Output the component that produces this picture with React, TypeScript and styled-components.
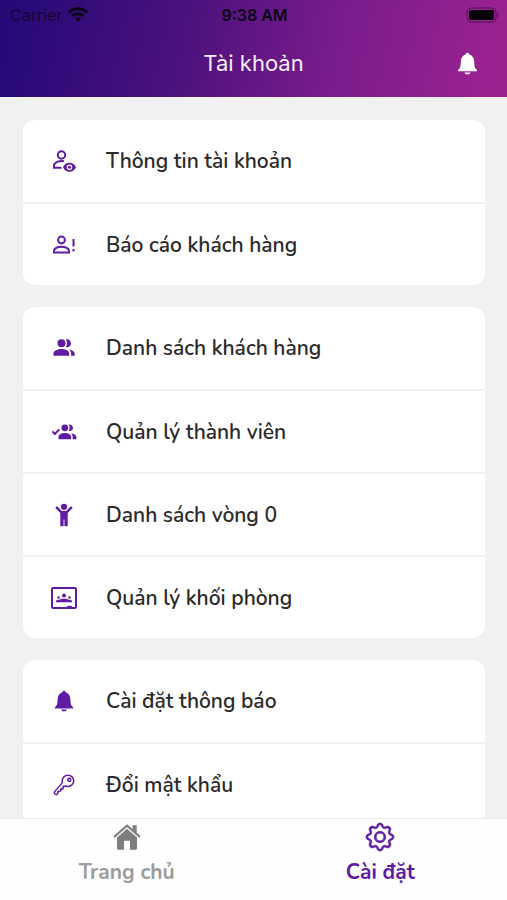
import React from "react";
import styled, { createGlobalStyle } from "styled-components";
import { BsGear } from "react-icons/bs";
import { IoKeyOutline } from "react-icons/io5";

const PURPLE = "#5f1ba3";

const GlobalStyle = createGlobalStyle`
  *, *::before, *::after { box-sizing: border-box; }
  body { margin: 0; background: #f1f1f1; }
  button { border: 0; padding: 0; margin: 0; background: none; font: inherit; color: inherit; cursor: pointer; }
`;

const Screen = styled.div`
  display: flex;
  flex-direction: column;
  height: 100vh;
  background: #f1f1f1;
  color: #2b2b2b;
  font-family: "Nunito", "Lato", sans-serif;
`;

const Header = styled.header`
  flex: none;
  background: linear-gradient(102deg, #270a78 4%, #4b117c 36%, #7a1c8c 66%, #9c2291 98%);
  font-family: "Inter", "Roboto", sans-serif;
`;

const StatusBar = styled.div`
  display: grid;
  grid-template-columns: 1fr auto 1fr;
  align-items: center;
  height: 29px;
  padding: 0 8px 0 10px;
  color: #0b0414;
  font-size: 16px;
  line-height: 20px;
`;

const Carrier = styled.div`
  display: flex;
  align-items: center;
  gap: 6px;
`;

const CarrierName = styled.span`
  opacity: 0.7;
`;

const Clock = styled.time`
  font-weight: 600;
`;

const Battery = styled.svg`
  justify-self: end;
`;

const TitleBar = styled.div`
  display: grid;
  grid-template-columns: 1fr auto 1fr;
  align-items: center;
  height: 68px;
  padding: 0 28px;
`;

const Title = styled.h1`
  grid-column: 2;
  margin: 0;
  color: #f6effa;
  font-size: 22px;
  font-weight: 400;
  line-height: 28px;
`;

const BellButton = styled.button`
  display: flex;
  justify-self: end;
  && { color: #fff; }
`;

const Content = styled.main`
  flex: 1;
  min-height: 0;
  overflow: hidden auto;
  scrollbar-width: none;
  display: flex;
  flex-direction: column;
  gap: 22px;
  padding: 23px 22px 23px 23px;
`;

const Card = styled.section`
  flex: none;
  border-radius: 12px;
  background: #fff;
  overflow: hidden;
`;

const Row = styled.button`
  && {
    display: grid;
    grid-template-columns: 26px 1fr;
    align-items: center;
    gap: 29px;
    width: 100%;
    height: 82px;
    padding: 0 28px;
    font-size: 21px;
    font-weight: 600;
    line-height: 28px;
    text-align: left;
  }
  && + && {
    height: 83px;
    border-top: 2px solid #f1f1f1;
  }
`;

const RowIcon = styled.span`
  display: flex;
  justify-content: center;
  color: ${PURPLE};
`;

const TabBar = styled.nav`
  flex: none;
  display: grid;
  grid-template-columns: 1fr 1fr;
  height: 82px;
  border-top: 1px solid #e9e8e6;
  background: #fefefe;
`;

const Tab = styled.button<{ $active?: boolean }>`
  && {
    display: flex;
    flex-direction: column;
    align-items: center;
    gap: 7px;
    padding-top: 4px;
    color: ${(p) => (p.$active ? PURPLE : "#9c9c9c")};
    font-size: 21px;
    font-weight: 700;
    line-height: 28px;
  }
  svg { color: ${(p) => (p.$active ? PURPLE : "#7e7e7e")}; }
`;

const BellIcon = ({ size = 24 }: { size?: number }) => (
  <svg width={size} height={size} viewBox="0 0 24 24" fill="currentColor" aria-hidden="true">
    <path d="M12 .8c-1 0-1.700.700-1.800 1.600C7.200 3.300 5.400 5.900 5.100 9.300L4.800 13.500c-.2 2.400-.9 3.900-2.700 5.200v1.400h19.800v-1.400c-1.800-1.300-2.500-2.800-2.700-5.200L18.900 9.300c-.3-3.400-2.100-6-5.100-6.900C13.700 1.500 13 .8 12 .8z" />
    <path d="M8.800 21.300h6.400c-.4 1.300-1.700 2.100-3.200 2.100s-2.800-.8-3.200-2.100z" />
  </svg>
);

const PersonEyeIcon = () => (
  <svg width="26" height="26" viewBox="0 0 26 26" fill="none" stroke="currentColor" strokeWidth="2" aria-hidden="true">
    <circle cx="10.500" cy="7" r="3.700" />
    <path d="M13 13.200C8.500 12.300 3 14.300 3 17.800v2h7.500" />
    <path fill="currentColor" stroke="none" fillRule="evenodd" d="M18.500 14.800c3 0 5.500 1.800 6.500 4.500-1 2.700-3.500 4.500-6.500 4.500S13 22 12 19.300c1-2.700 3.500-4.500 6.500-4.500zm0 1.700a2.800 2.800 0 1 0 0 5.600 2.800 2.800 0 0 0 0-5.600z" />
    <circle cx="18.500" cy="19.300" r="1.500" fill="currentColor" stroke="none" />
  </svg>
);

const PersonAlertIcon = () => (
  <svg width="26" height="26" viewBox="0 0 26 26" fill="none" stroke="currentColor" strokeWidth="2" aria-hidden="true">
    <circle cx="10.500" cy="8" r="3.400" />
    <path d="M3 20.500v-1.800c0-2.500 4-4 7.500-4s7.500 1.500 7.500 4v1.800z" />
    <path d="M22.500 7v7.500M22.500 17v2.400" />
  </svg>
);

const PeopleIcon = () => (
  <svg width="26" height="26" viewBox="0 0 26 26" fill="currentColor" aria-hidden="true">
    <circle cx="10.500" cy="8.200" r="4" />
    <path d="M2.500 20.700v-2.100c0-3 4.300-4.500 8-4.500s7.700 1.500 7.700 4.500v2.100z" />
    <path d="M14.800 4.400c2.500-.9 5.200 1 5.200 3.800s-2.700 4.700-5.200 3.800c1.600-2.300 1.600-5.300 0-7.600z" />
    <path d="M18 14.400c3 .6 5.700 2 5.700 4.300v2h-3.600v-2.100c0-1.700-.8-3.200-2.100-4.200z" />
  </svg>
);

const CheckPeopleIcon = () => (
  <svg width="26" height="26" viewBox="0 0 26 26" fill="currentColor" aria-hidden="true">
    <path d="M1.500 12.300l2.300 2.700 4.500-4.600" fill="none" stroke="currentColor" strokeWidth="2" />
    <circle cx="13.800" cy="8.800" r="3.400" />
    <path d="M7.500 20.200v-2.100c0-2.600 3.400-4 6.400-4s6.300 1.400 6.300 4v2.100z" />
    <path d="M17.600 5.600c2-.6 4.400.8 4.400 3.200s-2.400 3.800-4.400 3.200c1.400-1.900 1.400-4.500 0-6.400z" />
    <path d="M20 14.200c2.800.4 5.400 1.700 5.400 3.900v2.100h-3.700v-2.100c0-1.600-.6-2.900-1.700-3.900z" />
  </svg>
);

const ChildIcon = () => (
  <svg width="26" height="26" viewBox="0 0 26 26" fill="currentColor" aria-hidden="true">
    <circle cx="13" cy="4.800" r="3.100" />
    <path d="M5.800 5.700l4 4c1.900 1.100 4.500 1.100 6.400 0l4-4" fill="none" stroke="currentColor" strokeWidth="2.400" strokeLinecap="round" />
    <path d="M9.300 9h7.400v14.200c0 .6-.4 1-1 1h-1.300c-.6 0-1-.4-1-1V17.500h-.8v5.700c0 .6-.4 1-1 1h-1.300c-.6 0-1-.4-1-1z" />
  </svg>
);

const RoomIcon = () => (
  <svg width="26" height="22" viewBox="0 0 26 22" fill="currentColor" aria-hidden="true">
    <rect x="1" y="1" width="24" height="20" rx="1" fill="none" stroke="currentColor" strokeWidth="2" />
    <circle cx="13" cy="8.500" r="1.900" />
    <circle cx="7.500" cy="10.500" r="1.200" />
    <circle cx="18.500" cy="10.500" r="1.200" />
    <path d="M5 15.200v-1c0-1 1.600-1.600 3.500-1.400 1.200-1.400 7.800-1.400 9 0 1.900-.2 3.500.4 3.500 1.400v1z" />
    <path d="M15.500 21c0-1.500.8-2.300 2-2.300h2c1.200 0 2 .8 2 2.300z" />
  </svg>
);

const HomeIcon = () => (
  <svg width="28" height="28" viewBox="0 0 28 28" fill="currentColor" aria-hidden="true">
    <path d="M1 14L14 2.700 27 14" fill="none" stroke="currentColor" strokeWidth="2.200" />
    <path d="M19.500 2.200h4.200v8l-4.200-3.700z" />
    <path d="M14 5.700l10 8.800v10.700c0 .9-.6 1.500-1.500 1.500H17v-9h-6v9H5.500c-.9 0-1.500-.6-1.500-1.500V14.500z" />
  </svg>
);

const WifiIcon = () => (
  <svg width="20" height="15" viewBox="0 0 20 15" fill="none" stroke="currentColor" strokeWidth="3" aria-hidden="true">
    <path d="M1 5.300c5-4.700 13-4.700 18 0" />
    <path d="M4.300 9c3.200-3 8.200-3 11.400 0" />
    <path d="M10 14.800l-3.200-3.300c1.700-1.500 4.700-1.500 6.400 0z" fill="currentColor" stroke="none" />
  </svg>
);

const groups: { label: string; icon: React.ReactNode }[][] = [
  [
    { label: "Thông tin tài khoản", icon: <PersonEyeIcon /> },
    { label: "Báo cáo khách hàng", icon: <PersonAlertIcon /> },
  ],
  [
    { label: "Danh sách khách hàng", icon: <PeopleIcon /> },
    { label: "Quản lý thành viên", icon: <CheckPeopleIcon /> },
    { label: "Danh sách vòng 0", icon: <ChildIcon /> },
    { label: "Quản lý khối phòng", icon: <RoomIcon /> },
  ],
  [
    { label: "Cài đặt thông báo", icon: <BellIcon size={22} /> },
    { label: "Đổi mật khẩu", icon: <IoKeyOutline size={24} /> },
  ],
];

export default function App() {
  return (
    <Screen>
      <GlobalStyle />
      <Header>
        <StatusBar>
          <Carrier>
            <CarrierName>Carrier</CarrierName>
            <WifiIcon />
          </Carrier>
          <Clock>9:38 AM</Clock>
          <Battery width="33" height="16" viewBox="0 0 33 16" aria-label="Pin">
            <rect x="1" y="1" width="29" height="14" rx="4" fill="none" stroke="#0b0414" strokeOpacity="0.5" />
            <rect x="3" y="3" width="25" height="10" rx="2" fill="#050108" />
            <path d="M31 5.500c1.600.6 1.600 4.400 0 5z" fill="#0b0414" fillOpacity="0.5" />
          </Battery>
        </StatusBar>
        <TitleBar>
          <Title>Tài khoản</Title>
          <BellButton type="button" aria-label="Thông báo">
            <BellIcon size={23} />
          </BellButton>
        </TitleBar>
      </Header>
      <Content>
        {groups.map((rows) => (
          <Card key={rows[0].label}>
            {rows.map((row) => (
              <Row key={row.label} type="button">
                <RowIcon>{row.icon}</RowIcon>
                <span>{row.label}</span>
              </Row>
            ))}
          </Card>
        ))}
      </Content>
      <TabBar>
        <Tab type="button">
          <HomeIcon />
          Trang chủ
        </Tab>
        <Tab type="button" $active aria-current="page">
          <BsGear size={28} stroke="currentColor" strokeWidth={0.4} overflow="visible" />
          Cài đặt
        </Tab>
      </TabBar>
    </Screen>
  );
}
